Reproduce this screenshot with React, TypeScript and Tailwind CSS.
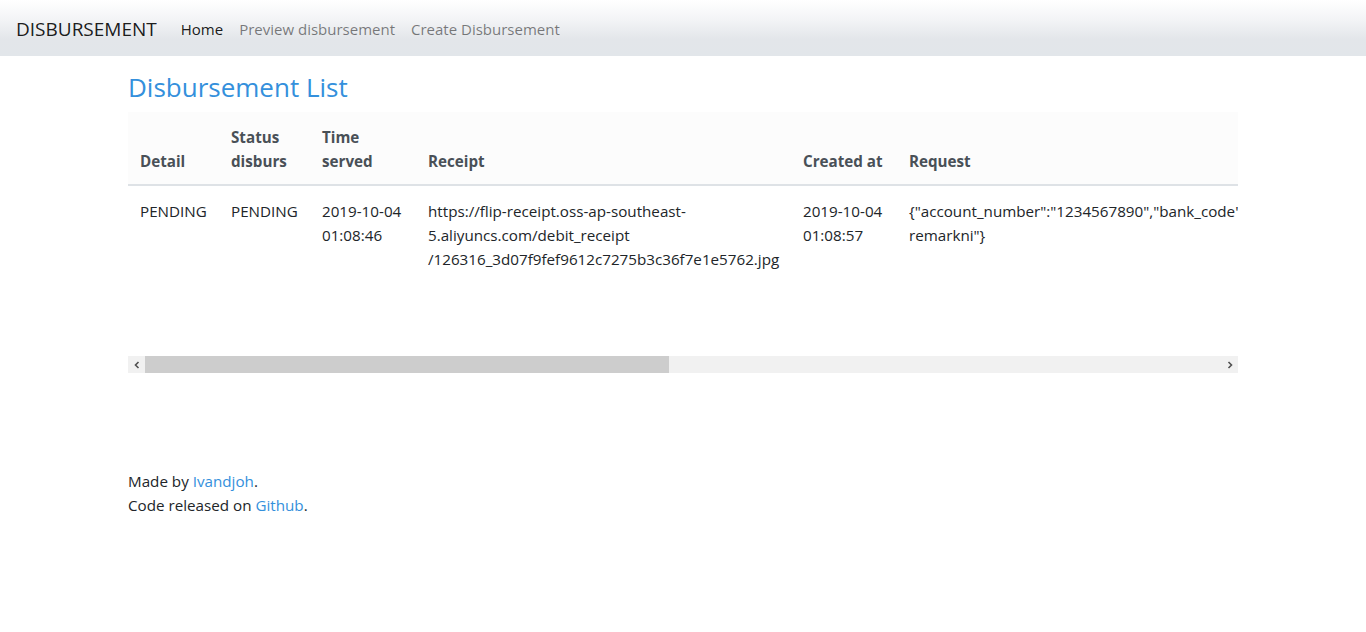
import React from 'react';

const font = { fontFamily: '"Open Sans", "Noto Sans", sans-serif' };

const rows = [
  {
    detail: 'PENDING',
    status: 'PENDING',
    timeServed: ['2019-10-04', '01:08:46'],
    createdAt: ['2019-10-04', '01:08:57'],
    response: '{"id":126316,"amount":10000,"status":"PENDING","timestamp":"2019-10-04 01:08:46","bank_code":"bni"}',
  },
];

export default function App() {
  return (
    <div className="min-h-screen bg-white text-[#212529] text-[15.2px] leading-[24px]" style={font}>
      <nav className="h-14 flex items-center px-4 pt-[2px] bg-[linear-gradient(180deg,#ffffff_0%,#f3f4f6_35%,#e3e6ea_70%,#e2e6ea_100%)]">
        <span className="text-[19px] text-black/90 mr-4">DISBURSEMENT</span>
        <ul className="flex items-center text-[15px]">
          <li><a className="px-2 text-black/90">Home</a></li>
          <li><a className="px-2 text-black/50">Preview disbursement</a></li>
          <li><a className="px-2 text-black/50">Create Disbursement</a></li>
        </ul>
      </nav>

      <main className="w-[1110px] mx-auto pt-[14px]">
        <h2 className="text-[26px] leading-[34px] text-[#3490dc] mb-[8px]">Disbursement List</h2>

        <div className="w-full">
          <div className="h-[244px] overflow-hidden">
            <table className="table-fixed w-[2280px] border-collapse text-left">
              <colgroup>
                <col className="w-[91px]" />
                <col className="w-[91px]" />
                <col className="w-[106px]" />
                <col className="w-[375px]" />
                <col className="w-[106px]" />
                <col className="w-[780px]" />
                <col className="w-[731px]" />
              </colgroup>
              <thead className="bg-[#fcfcfc] text-[#495057]">
                <tr className="border-b-2 border-[#dee2e6]">
                  <th className="px-3 pt-[13px] pb-[11px] align-bottom font-bold">Detail</th>
                  <th className="px-3 pt-[13px] pb-[11px] align-bottom font-bold">Status<br />disburs</th>
                  <th className="px-3 pt-[13px] pb-[11px] align-bottom font-bold">Time<br />served</th>
                  <th className="px-3 pt-[13px] pb-[11px] align-bottom font-bold">Receipt</th>
                  <th className="px-3 pt-[13px] pb-[11px] align-bottom font-bold">Created at</th>
                  <th className="px-3 pt-[13px] pb-[11px] align-bottom font-bold">Request</th>
                  <th className="px-3 pt-[13px] pb-[11px] align-bottom font-bold">Response</th>
                </tr>
              </thead>
              <tbody>
                {rows.map((r, i) => (
                  <tr key={i}>
                    <td className="px-3 pt-[13px] pb-3 align-top">{r.detail}</td>
                    <td className="px-3 pt-[13px] pb-3 align-top">{r.status}</td>
                    <td className="px-3 pt-[13px] pb-3 align-top">{r.timeServed[0]}<br />{r.timeServed[1]}</td>
                    <td className="px-3 pt-[13px] pb-3 align-top">
                      https://flip-receipt.oss-ap-southeast-<br />
                      5.aliyuncs.com/debit_receipt<br />
                      /126316_3d07f9fef9612c7275b3c36f7e1e5762.jpg
                    </td>
                    <td className="px-3 pt-[13px] pb-3 align-top">{r.createdAt[0]}<br />{r.createdAt[1]}</td>
                    <td className="px-3 pt-[13px] pb-3 align-top">
                      {'{"account_number":"1234567890","bank_code":"bni","amount":"10000","remark":"sample'}<br />
                      {'remarkni"}'}
                    </td>
                    <td className="px-3 pt-[13px] pb-3 align-top">{r.response}</td>
                  </tr>
                ))}
              </tbody>
            </table>
          </div>

          {/* horizontal scrollbar */}
          <div className="h-[17px] bg-[#f1f1f1] flex items-center">
            <div className="w-[17px] h-full flex items-center justify-center">
              <svg width="8" height="8" viewBox="0 0 8 8"><path d="M5.5 1 L2.5 4 L5.5 7" fill="none" stroke="#505050" strokeWidth="1.6" /></svg>
            </div>
            <div className="flex-1 h-full">
              <div className="w-[524px] h-full bg-[#cdcdcd]" />
            </div>
            <div className="w-[17px] h-full flex items-center justify-center">
              <svg width="8" height="8" viewBox="0 0 8 8"><path d="M2.5 1 L5.5 4 L2.5 7" fill="none" stroke="#505050" strokeWidth="1.6" /></svg>
            </div>
          </div>
        </div>

        <footer className="mt-[96px]">
          <p>Made by <a className="text-[#3490dc]">Ivandjoh</a>.</p>
          <p>Code released on <a className="text-[#3490dc]">Github</a>.</p>
        </footer>
      </main>
    </div>
  );
}
